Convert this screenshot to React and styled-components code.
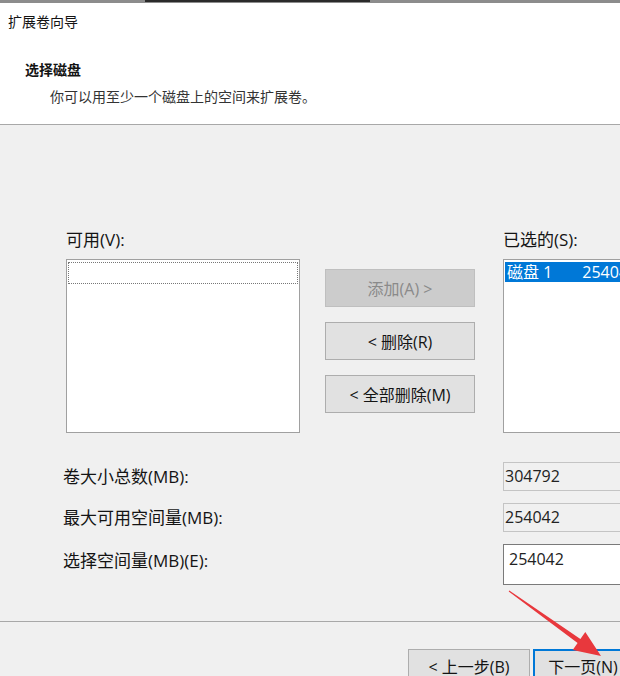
import React from 'react';
import styled, { createGlobalStyle } from 'styled-components';

const GlobalStyle = createGlobalStyle`
  html, body {
    margin: 0;
    padding: 0;
    overflow: hidden;
    background: #f0f0f0;
  }
  body {
    font-family: "Open Sans", "Noto Sans CJK SC", sans-serif;
    font-size: 16px;
    color: #141414;
  }
`;

const Window = styled.div`
  position: relative;
  width: 620px;
  height: 676px;
  overflow: hidden;
  background: #f0f0f0;
`;

const TopEdge = styled.div`
  height: 3px;
  background: #8c8c8c;
  display: flex;
  padding-left: 145px;
`;

const TitleScrap = styled.div`
  width: 225px;
  height: 2px;
  background: #2a2a2a;
`;

const Header = styled.div`
  background: #fff;
  height: 122px;
  box-sizing: border-box;
  padding: 9px 8px 0;
  border-bottom: 1px solid #a8a8a8;
`;

const WizardTitle = styled.div`
  font-size: 14px;
  line-height: 20px;
`;

const StepTitle = styled.div`
  margin: 28px 0 0 17px;
  font-size: 14px;
  line-height: 20px;
  font-weight: bold;
`;

const StepText = styled.div`
  margin: 7px 0 0 42px;
  font-size: 14px;
  line-height: 20px;
  color: #333;
`;

const Body = styled.div`
  padding-top: 105px;
`;

const Picker = styled.div`
  display: grid;
  grid-template-columns: 234px 203px 200px;
  grid-template-rows: 20px 174px;
  row-gap: 9px;
  padding-left: 66px;
`;

const Label = styled.div`
  font-size: 17px;
  line-height: 20px;
  white-space: nowrap;
  grid-column: ${(p) => p.$col};
`;

const ListBox = styled.div`
  box-sizing: border-box;
  height: 174px;
  background: #fff;
  border: 1px solid #a0a0a0;
  padding: 2px 1px;
  grid-column: ${(p) => p.$col};
  grid-row: 2;
  overflow: hidden;
`;

const ListItem = styled.div`
  height: ${(p) => (p.$selected ? 20 : 22)}px;
  box-sizing: border-box;
  line-height: 20px;
  white-space: nowrap;
  padding-left: 2px;
  background: ${(p) => (p.$selected ? '#0078d7' : '#fff')};
  color: ${(p) => (p.$selected ? '#fff' : '#000')};
  border: ${(p) => (p.$focus ? '1px dotted #777' : 'none')};
`;

const Gap = styled.span`
  display: inline-block;
  width: ${(p) => p.$w}px;
`;

const ButtonColumn = styled.div`
  grid-column: 2;
  grid-row: 2;
  margin-left: 25px;
  padding-top: 10px;
  display: flex;
  flex-direction: column;
  gap: 15px;
`;

const Button = styled.div`
  box-sizing: border-box;
  height: ${(p) => p.$h || 38}px;
  width: ${(p) => p.$w || 150}px;
  display: flex;
  align-items: center;
  justify-content: center;
  white-space: nowrap;
  background: ${(p) => (p.$disabled ? '#cccccc' : '#e1e1e1')};
  color: ${(p) => (p.$disabled ? '#8a8a8a' : '#141414')};
  border: ${(p) =>
    p.$default ? '2px solid #0078d7' : `1px solid ${p.$disabled ? '#bfbfbf' : '#adadad'}`};
  flex-shrink: 0;
`;

const Fields = styled.div`
  margin-top: 29px;
  padding-left: 63px;
  display: flex;
  flex-direction: column;
  gap: 12px;
`;

const FieldRow = styled.div`
  display: flex;
  align-items: ${(p) => (p.$top ? 'flex-start' : 'center')};
`;

const FieldLabel = styled.div`
  width: 440px;
  flex-shrink: 0;
  font-size: 17px;
  line-height: 20px;
  white-space: nowrap;
  padding-top: ${(p) => (p.$top ? 7 : 0)}px;
`;

const Field = styled.div`
  box-sizing: border-box;
  width: 150px;
  flex-shrink: 0;
  height: ${(p) => (p.$editable ? 41 : 29)}px;
  background: ${(p) => (p.$editable ? '#fff' : '#f0f0f0')};
  border: 1px solid ${(p) => (p.$editable ? '#7a7a7a' : '#c4c4c4')};
  line-height: 20px;
  color: #222;
  padding: ${(p) => (p.$editable ? '4px 5px' : '3px 1px')};
`;

const Footer = styled.div`
  margin-top: 36px;
  border-top: 1px solid #a8a8a8;
  padding: 27px 0 0 408px;
  display: flex;
  gap: 3px;
`;

const Overlay = styled.svg`
  position: absolute;
  left: 0;
  top: 0;
  pointer-events: none;
`;

export default function App() {
  return (
    <Window>
      <GlobalStyle />
      <TopEdge>
        <TitleScrap />
      </TopEdge>
      <Header>
        <WizardTitle>扩展卷向导</WizardTitle>
        <StepTitle>选择磁盘</StepTitle>
        <StepText>你可以用至少一个磁盘上的空间来扩展卷。</StepText>
      </Header>
      <Body>
        <Picker>
          <Label $col={1}>可用(V):</Label>
          <Label $col={3}>已选的(S):</Label>
          <ListBox $col={1}>
            <ListItem $focus />
          </ListBox>
          <ButtonColumn>
            <Button $disabled>添加(A) &gt;</Button>
            <Button>&lt; 删除(R)</Button>
            <Button>&lt; 全部删除(M)</Button>
          </ButtonColumn>
          <ListBox $col={3}>
            <ListItem $selected>
              磁盘 1<Gap $w={30} />254042 MB
            </ListItem>
          </ListBox>
        </Picker>
        <Fields>
          <FieldRow>
            <FieldLabel>卷大小总数(MB):</FieldLabel>
            <Field>304792</Field>
          </FieldRow>
          <FieldRow>
            <FieldLabel>最大可用空间量(MB):</FieldLabel>
            <Field>254042</Field>
          </FieldRow>
          <FieldRow $top>
            <FieldLabel $top>选择空间量(MB)(E):</FieldLabel>
            <Field $editable>254042</Field>
          </FieldRow>
        </Fields>
        <Footer>
          <Button $w={122} $h={34}>&lt; 上一步(B)</Button>
          <Button $w={100} $h={34} $default>下一页(N)</Button>
        </Footer>
      </Body>
      <Overlay width="620" height="676" viewBox="0 0 620 676">
        <polygon
          points="509.3,590.6 580.4,638.9 585.3,632 601,656 572.7,650 577.6,643.1 508.7,591.4"
          fill="#e8383d"
        />
      </Overlay>
    </Window>
  );
}
